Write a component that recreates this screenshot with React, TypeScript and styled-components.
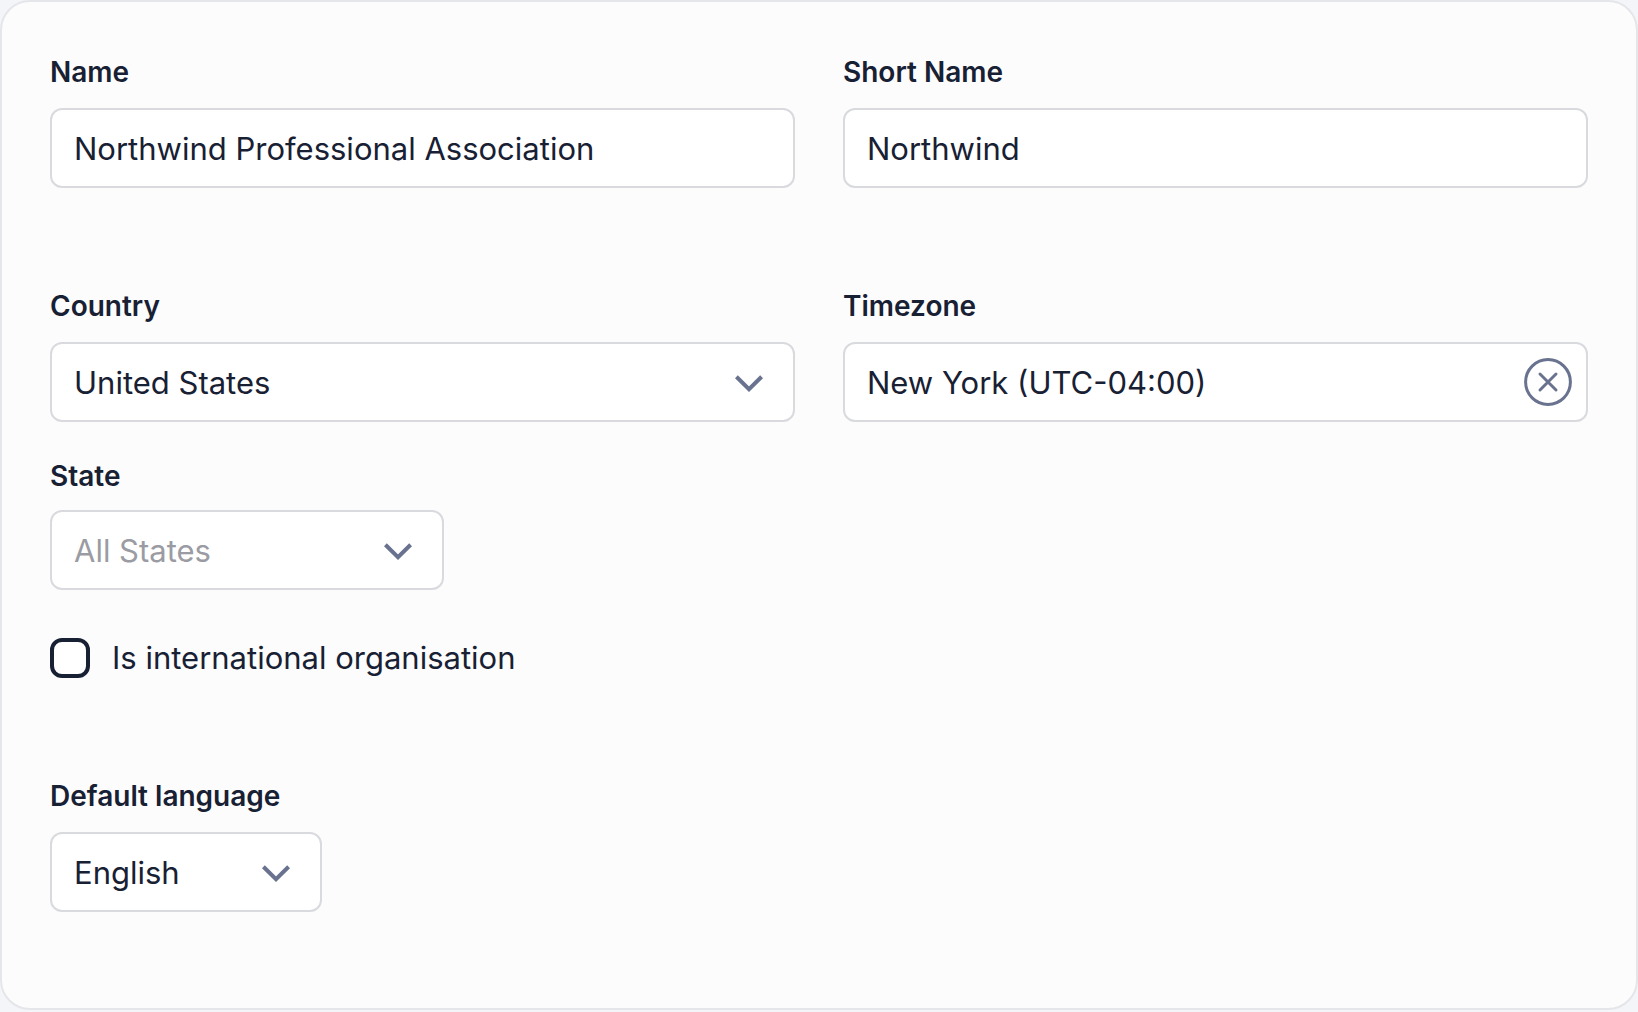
import React, { useState } from "react";
import styled, { createGlobalStyle } from "styled-components";

const color = {
  page: "#f4f5f8",
  card: "#fcfcfd",
  cardBorder: "#e5e6e9",
  field: "#ffffff",
  fieldBorder: "#d9dade",
  text: "#182033",
  placeholder: "#9a9ba3",
  icon: "#69738f",
};

const GlobalStyle = createGlobalStyle`
  *, *::before, *::after { box-sizing: border-box; }
  body {
    margin: 0;
    background: ${color.page};
    color: ${color.text};
    font-family: Inter, "Liberation Sans", sans-serif;
  }
`;

const Card = styled.form`
  display: flex;
  flex-direction: column;
  gap: 98px;
  padding: 50px 48px 96px;
  border: 2px solid ${color.cardBorder};
  border-radius: 30px;
  background: ${color.card};
`;

const Columns = styled.div`
  display: grid;
  grid-template-columns: repeat(2, minmax(0, 1fr));
  align-items: start;
  gap: 48px;
`;

const Stack = styled.div<{ $gap: number }>`
  display: flex;
  flex-direction: column;
  align-items: stretch;
  gap: ${(p) => p.$gap}px;
`;

const Field = styled.div<{ $width?: number; $gap?: number }>`
  display: flex;
  flex-direction: column;
  gap: ${(p) => p.$gap ?? 16}px;
  width: ${(p) => (p.$width ? `${p.$width}px` : "100%")};
  max-width: 100%;
`;

const Label = styled.label`
  font-size: 28px;
  font-weight: 600;
  font-optical-sizing: none;
  line-height: 40px;
`;

const Control = styled.div`
  position: relative;
  display: flex;
  align-items: center;
  height: 80px;
  border: 2px solid ${color.fieldBorder};
  border-radius: 12px;
  background: ${color.field};

  &:focus-within {
    border-color: ${color.icon};
  }
`;

const TextInput = styled.input`
  flex: 1;
  min-width: 0;
  height: 100%;
  padding: 0 22px;
  border: 0;
  outline: 0;
  background: transparent;
  color: inherit;
  font-family: inherit;
  font-size: 31px;
`;

const Select = styled.select<{ $empty: boolean }>`
  flex: 1;
  min-width: 0;
  height: 100%;
  padding: 0 72px 0 22px;
  border: 0;
  outline: 0;
  appearance: none;
  background: transparent;
  color: ${(p) => (p.$empty ? color.placeholder : color.text)};
  font-family: inherit;
  font-size: 31px;
  cursor: pointer;
`;

const Chevron = styled.svg`
  position: absolute;
  top: 29px;
  right: 30px;
  width: 28px;
  height: 20px;
  pointer-events: none;
`;

const ClearButton = styled.button`
  display: flex;
  margin-right: 14px;
  padding: 0;
  border: 0;
  border-radius: 50%;
  background: transparent;
  color: ${color.icon};
  cursor: pointer;
`;

const CheckRow = styled.label`
  display: flex;
  align-items: center;
  gap: 22px;
  font-size: 31px;
  line-height: 40px;
  cursor: pointer;
`;

const Checkbox = styled.input`
  appearance: none;
  flex: none;
  width: 40px;
  height: 40px;
  margin: 0;
  border: 4px solid ${color.text};
  border-radius: 12px;
  background: ${color.field};
  cursor: pointer;

  &:checked {
    background: ${color.text};
    box-shadow: inset 0 0 0 5px ${color.field};
  }
`;

type SelectFieldProps = {
  id: string;
  label: string;
  options: { value: string; text: string }[];
  width?: number;
  gap?: number;
};

function SelectField({ id, label, options, width, gap }: SelectFieldProps) {
  const [value, setValue] = useState(options[0].value);
  return (
    <Field $width={width} $gap={gap}>
      <Label htmlFor={id}>{label}</Label>
      <Control>
        <Select id={id} value={value} $empty={value === ""} onChange={(e) => setValue(e.target.value)}>
          {options.map((o) => (
            <option key={o.value} value={o.value}>
              {o.text}
            </option>
          ))}
        </Select>
        <Chevron viewBox="0 0 28 20" fill="none" aria-hidden="true">
          <path d="M1.4 3.8 14 16.2 26.6 3.8" stroke={color.icon} strokeWidth="4" />
        </Chevron>
      </Control>
    </Field>
  );
}

function TextField({ id, label, initial, clearable }: { id: string; label: string; initial: string; clearable?: boolean }) {
  const [value, setValue] = useState(initial);
  return (
    <Field>
      <Label htmlFor={id}>{label}</Label>
      <Control>
        <TextInput id={id} type="text" value={value} onChange={(e) => setValue(e.target.value)} />
        {clearable && (
          <ClearButton type="button" aria-label={`Clear ${label}`} onClick={() => setValue("")}>
            <svg width="48" height="48" viewBox="0 0 48 48" fill="none" stroke="currentColor" strokeWidth="3" aria-hidden="true">
              <circle cx="24" cy="24" r="22.4" />
              <path d="m16 16 16 16M32 16 16 32" strokeLinecap="round" />
            </svg>
          </ClearButton>
        )}
      </Control>
    </Field>
  );
}

export default function App() {
  const [international, setInternational] = useState(false);
  return (
    <>
      <GlobalStyle />
      <Card onSubmit={(e) => e.preventDefault()}>
        <Columns>
          <TextField id="name" label="Name" initial="Northwind Professional Association" />
          <TextField id="short-name" label="Short Name" initial="Northwind" />
        </Columns>
        <Columns>
          <Stack $gap={48}>
            <Stack $gap={34}>
              <SelectField id="country" label="Country" options={[{ value: "us", text: "United States" }]} />
              <SelectField id="state" label="State" width={394} gap={14} options={[{ value: "", text: "All States" }]} />
            </Stack>
            <CheckRow>
              <Checkbox
                type="checkbox"
                checked={international}
                onChange={(e) => setInternational(e.target.checked)}
              />
              Is international organisation
            </CheckRow>
          </Stack>
          <TextField id="timezone" label="Timezone" initial="New York (UTC-04:00)" clearable />
        </Columns>
        <SelectField id="language" label="Default language" width={272} options={[{ value: "en", text: "English" }]} />
      </Card>
    </>
  );
}
